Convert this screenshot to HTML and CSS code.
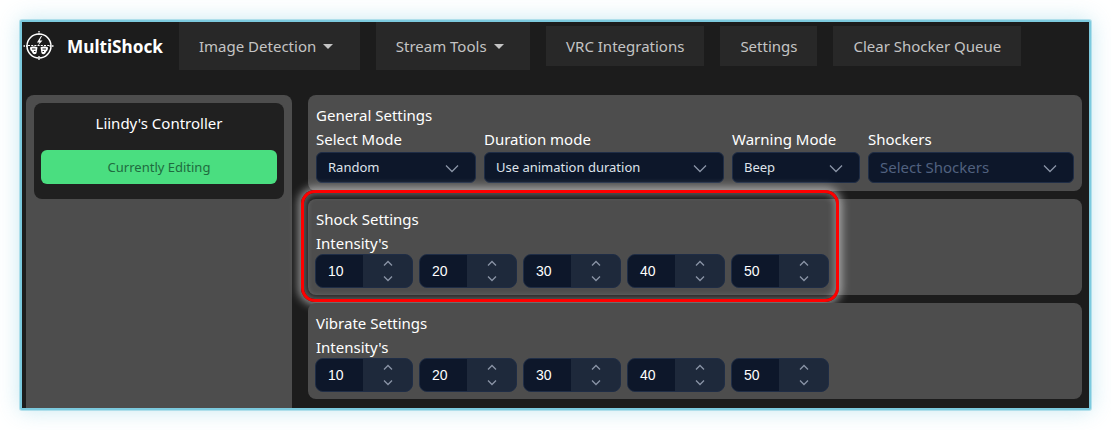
FILE: index.html
```html
<!DOCTYPE html>
<html lang="en">
<head>
<meta charset="utf-8">
<title>MultiShock</title>
<link rel="stylesheet" href="styles.css">
</head>
<body>
<div class="frame">
  <nav class="nav">
    <div class="brand">
      <svg class="logo" width="32" height="32" viewBox="0 0 32 32" fill="none" stroke="#fff">
        <circle cx="16" cy="16" r="12" stroke-width="1.500"/>
        <path d="M16 1v5M16 26v5M0.500 16h5M26.500 16h5" stroke-width="1.300" stroke-dasharray="1.500 1"/>
        <path d="M18 6 14 12.500h2.500L14.500 16l5-5.500h-2.800L19 6z" fill="#fff" stroke="none"/>
        <path d="M5 15.500h22" stroke-width="1.100" stroke-dasharray="2 1.200"/>
        <path d="M7 17.500c1.500-1.200 5.500-1.200 7.500-.3l-1 6c-1 1.400-2.800 1.400-3.800 0l-1-1.800c-1.200-.5-1.700-2.200-1.700-3.900zM25 17.500c-1.500-1.200-5.500-1.200-7.500-.3l1 6c1 1.400 2.800 1.400 3.800 0l1-1.800c1.200-.5 1.700-2.200 1.700-3.900z" fill="#fff" stroke="none"/>
        <path d="M9 19h3.500M19.500 19H23M11 21.500h1.500M19.500 21.500H21" stroke="#1c1c1c" stroke-width="1.200"/>
      </svg>
      <span class="brand-name">MultiShock</span>
    </div>
    <a class="nav-btn tall">Image Detection<span class="caret"></span></a>
    <a class="nav-btn tall">Stream Tools<span class="caret"></span></a>
    <a class="nav-btn">VRC Integrations</a>
    <a class="nav-btn">Settings</a>
    <a class="nav-btn">Clear Shocker Queue</a>
  </nav>
  <div class="main">
    <aside class="side">
      <div class="card">
        <div class="card-title">Liindy's Controller</div>
        <button class="editing">Currently Editing</button>
      </div>
    </aside>
    <div class="panels">
      <section class="panel">
        <div class="label">General Settings</div>
        <div class="fields">
          <div class="field w-mode">
            <div class="label">Select Mode</div>
            <div class="select"><span class="select-text">Random</span><svg class="chev" width="16" height="16" viewBox="0 0 16 16"><path d="M2 5.500 8 11.500l6-6"/></svg></div>
          </div>
          <div class="field w-dur">
            <div class="label">Duration mode</div>
            <div class="select"><span class="select-text">Use animation duration</span><svg class="chev" width="16" height="16" viewBox="0 0 16 16"><path d="M2 5.500 8 11.500l6-6"/></svg></div>
          </div>
          <div class="field w-warn">
            <div class="label">Warning Mode</div>
            <div class="select"><span class="select-text">Beep</span><svg class="chev" width="16" height="16" viewBox="0 0 16 16"><path d="M2 5.500 8 11.500l6-6"/></svg></div>
          </div>
          <div class="field w-shock">
            <div class="label">Shockers</div>
            <div class="select placeholder"><span class="select-text">Select Shockers</span><svg class="chev" width="16" height="16" viewBox="0 0 16 16"><path d="M2 5.500 8 11.500l6-6"/></svg></div>
          </div>
        </div>
      </section>
      <section class="panel">
        <div class="label">Shock Settings</div>
        <div class="label">Intensity's</div>
        <div class="numbers">
          <div class="num"><span class="val">10</span><span class="spin"><svg width="12" height="26" viewBox="0 0 12 26"><path d="M2 7.500 6 3.500l4 4M2 18.500l4 4 4-4"/></svg></span></div>
          <div class="num"><span class="val">20</span><span class="spin"><svg width="12" height="26" viewBox="0 0 12 26"><path d="M2 7.500 6 3.500l4 4M2 18.500l4 4 4-4"/></svg></span></div>
          <div class="num"><span class="val">30</span><span class="spin"><svg width="12" height="26" viewBox="0 0 12 26"><path d="M2 7.500 6 3.500l4 4M2 18.500l4 4 4-4"/></svg></span></div>
          <div class="num"><span class="val">40</span><span class="spin"><svg width="12" height="26" viewBox="0 0 12 26"><path d="M2 7.500 6 3.500l4 4M2 18.500l4 4 4-4"/></svg></span></div>
          <div class="num"><span class="val">50</span><span class="spin"><svg width="12" height="26" viewBox="0 0 12 26"><path d="M2 7.500 6 3.500l4 4M2 18.500l4 4 4-4"/></svg></span></div>
        </div>
        <div class="highlight"></div>
      </section>
      <section class="panel">
        <div class="label">Vibrate Settings</div>
        <div class="label">Intensity's</div>
        <div class="numbers">
          <div class="num"><span class="val">10</span><span class="spin"><svg width="12" height="26" viewBox="0 0 12 26"><path d="M2 7.500 6 3.500l4 4M2 18.500l4 4 4-4"/></svg></span></div>
          <div class="num"><span class="val">20</span><span class="spin"><svg width="12" height="26" viewBox="0 0 12 26"><path d="M2 7.500 6 3.500l4 4M2 18.500l4 4 4-4"/></svg></span></div>
          <div class="num"><span class="val">30</span><span class="spin"><svg width="12" height="26" viewBox="0 0 12 26"><path d="M2 7.500 6 3.500l4 4M2 18.500l4 4 4-4"/></svg></span></div>
          <div class="num"><span class="val">40</span><span class="spin"><svg width="12" height="26" viewBox="0 0 12 26"><path d="M2 7.500 6 3.500l4 4M2 18.500l4 4 4-4"/></svg></span></div>
          <div class="num"><span class="val">50</span><span class="spin"><svg width="12" height="26" viewBox="0 0 12 26"><path d="M2 7.500 6 3.500l4 4M2 18.500l4 4 4-4"/></svg></span></div>
        </div>
      </section>
    </div>
  </div>
</div>
</body>
</html>
```
FILE: styles.css
```css
* { box-sizing: border-box; }
html, body { margin: 0; height: 100%; }
body {
  background: #fff;
  padding: 20px;
  font-family: "Noto Sans", "Open Sans", sans-serif;
  overflow: hidden;
}
.frame {
  width: 1071px;
  height: 390px;
  background: #1c1c1c;
  border: 2px solid #7ccade;
  border-radius: 2px;
  box-shadow: 0 0 0 1px rgba(124, 202, 222, 0.5), 0 0 22px rgba(124, 202, 222, 0.45);
  overflow: hidden;
  display: flex;
  flex-direction: column;
}
.nav {
  display: flex;
  align-items: center;
  height: 48px;
  padding-left: 1px;
  flex: none;
}
.brand { display: flex; align-items: center; width: 156px; flex: none; }
.logo { flex: none; margin-right: 12px; }
.brand-name { color: #fff; font-size: 17.200px; font-weight: 700; }
.nav-btn {
  height: 40px;
  display: flex;
  align-items: center;
  padding: 0 20px;
  margin-right: 16px;
  background: #282828;
  color: #c4c4c4;
  font-size: 15px;
  white-space: nowrap;
}
.tall { height: 48px; }
.caret {
  width: 0;
  height: 0;
  margin: 0 6.500px 0 7px;
  border-left: 5px solid transparent;
  border-right: 5px solid transparent;
  border-top: 5px solid #c4c4c4;
}
.main {
  flex: 1;
  min-height: 0;
  display: flex;
  gap: 16px;
  padding: 25px 7px 0 4px;
}
.side {
  width: 266px;
  flex: none;
  background: #4d4d4d;
  border-radius: 8px 8px 0 0;
  padding: 8px;
}
.card {
  height: 96px;
  background: #202020;
  border-radius: 8px;
  padding: 9px 7px 0;
}
.card-title { color: #fff; font-size: 15px; line-height: 22px; text-align: center; margin-bottom: 16px; }
.editing {
  display: block;
  width: 100%;
  height: 34px;
  border: 0;
  border-radius: 6px;
  background: #4ade80;
  color: #1f6b3f;
  font: 13px "Noto Sans", sans-serif;
}
.panels { flex: 1; display: flex; flex-direction: column; gap: 8px; }
.panel {
  position: relative;
  height: 96px;
  flex: none;
  background: #4d4d4d;
  border-radius: 8px;
  padding: 9px 8px 0;
}
.label { color: #fff; font-size: 15px; line-height: 22px; height: 24px; white-space: nowrap; }
.fields { display: flex; gap: 8px; }
.field { flex: none; }
.w-mode { width: 160px; }
.w-dur { width: 240px; }
.w-warn { width: 128px; }
.w-shock { width: 206px; }
.select {
  display: flex;
  align-items: center;
  justify-content: space-between;
  height: 31px;
  padding: 0 15px 0 11px;
  background: #0d172a;
  border: 1px solid #1f2d46;
  border-radius: 6px;
  color: #dfe3ea;
  font-size: 13px;
}
.select-text { padding-bottom: 2px; }
.placeholder { color: #51617f; font-size: 15px; }
.chev { flex: none; fill: none; stroke: #8a94a6; stroke-width: 1.300; }
.numbers { display: flex; gap: 6px; margin: -2px 0 0 -1px; }
.num {
  display: flex;
  width: 98px;
  height: 34px;
  border-radius: 8px;
  overflow: hidden;
  border: 1px solid #1f2d46;
  background: #1e293b;
}
.val {
  width: 47px;
  flex: none;
  background: #0d172a;
  color: #fff;
  line-height: 32px;
  padding-left: 12px;
  font-family: "Liberation Sans", sans-serif;
  font-size: 14px;
}
.spin { flex: 1; display: flex; align-items: center; justify-content: center; }
.spin svg { fill: none; stroke: #8a94a6; stroke-width: 1.300; }
.highlight {
  position: absolute;
  left: -7px;
  top: -9px;
  width: 538px;
  height: 112px;
  border: 3px solid #f00;
  border-radius: 14px;
  box-shadow: 0 0 8px 3px rgba(255, 255, 255, 0.5), inset 0 0 6px 2px rgba(255, 255, 255, 0.3);
  pointer-events: none;
}
```
